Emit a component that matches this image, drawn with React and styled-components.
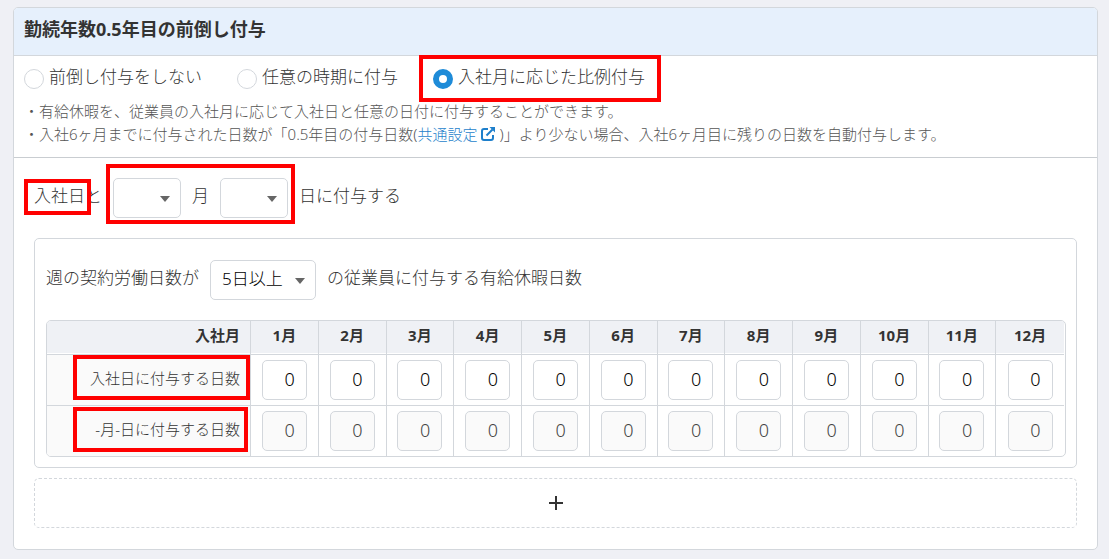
import React, { useState } from 'react'
import styled, { createGlobalStyle } from 'styled-components'

const GlobalStyle = createGlobalStyle`
    *, *::before, *::after {
        box-sizing: border-box;
    }
    body {
        margin: 0;
        background: #eff0f5;
        color: #333;
        font-family: 'Noto Sans', 'Noto Sans CJK JP', sans-serif;
        font-size: 17px;
        font-weight: 300;
        line-height: 24px;
    }
    input, select, button {
        margin: 0;
        font: inherit;
    }
`
const Page = styled.main`
    padding: 7px 11px 9px 13px;
`
const Card = styled.section`
    background: #fff;
    border: 1px solid #d3d7dc;
    border-radius: 5px;
    overflow: hidden;
`
const CardTitle = styled.h2`
    margin: 0;
    padding: 9px 10px 14px;
    background: #e6f0fc;
    border-bottom: 1px solid #d3d7dc;
    font-size: 18px;
    font-weight: 700;
    line-height: 24px;
`
const MethodArea = styled.div`
    display: flex;
    flex-direction: column;
    gap: 11px;
    padding: 13px 10px 11px;
    border-bottom: 1px solid #c9cdd1;
`
const RadioRow = styled.div`
    display: flex;
    gap: 35px;
`
const Highlight = styled.span`
    position: relative;
    display: inline-flex;

    &::after {
        content: '';
        position: absolute;
        inset: ${({ $inset }) => $inset};
        border: 4px solid #f00;
        pointer-events: none;
    }
`
const RadioLabel = styled.label`
    display: flex;
    align-items: center;
    gap: 5px;
    height: 20px;
    white-space: nowrap;
    cursor: pointer;
`
const RadioInput = styled.input`
    appearance: none;
    width: 20px;
    height: 20px;
    border: 1px solid #d3d7dc;
    border-radius: 50%;
    background: #fff;

    &:checked {
        border: 6px solid #1e8bd8;
    }
`
const Text = styled.span`
    padding-bottom: 5px;
    white-space: nowrap;
`
const Notes = styled.ul`
    margin: 0;
    padding: 0;
    list-style: none;
    color: #555;
    font-size: 15px;
    line-height: 23px;
`
const Link = styled.a`
    color: #1e7fcb;
    text-decoration: none;

    svg {
        margin: 0 5px 0 3px;
        vertical-align: -1px;
    }
`
const SettingArea = styled.div`
    display: flex;
    flex-direction: column;
    gap: 20px;
    padding: 20px 20px 21px;
`
const Sentence = styled.div`
    display: flex;
    align-items: center;
    gap: 11px;
`
const SelectBox = styled.span`
    position: relative;
    width: ${({ $wide }) => ($wide ? '106px' : '68px')};

    svg {
        position: absolute;
        top: 18px;
        right: 11px;
        pointer-events: none;
    }
`
const SelectInput = styled.select`
    appearance: none;
    display: block;
    width: 100%;
    height: 40px;
    padding: 0 11px 3px;
    border: 1px solid #d3d7dc;
    border-radius: 5px;
    background: #fff;
    color: #000;
`
const Groups = styled.div`
    display: flex;
    flex-direction: column;
    gap: 10px;
`
const Group = styled.div`
    display: flex;
    flex-direction: column;
    gap: 20px;
    padding: 21px 10px 10px 11px;
    border: 1px solid #d3d7dc;
    border-radius: 5px;
`
const TableFrame = styled.div`
    padding-right: 1px;
    border: 1px solid #d3d7dc;
    border-radius: 5px;
    overflow: hidden;
`
const Table = styled.table`
    width: 100%;
    table-layout: fixed;
    border-collapse: separate;
    border-spacing: 0;
    font-size: 15px;
`
const MonthHead = styled.th`
    height: 34px;
    padding: 0 10px 6px;
    background: #eff1f5;
    border-right: 1px solid #d3d7dc;
    border-bottom: 1px solid #d3d7dc;
    box-shadow: inset 0 -1px #fff;
    font-weight: 700;
    text-align: ${({ $label }) => ($label ? 'right' : 'center')};
    width: ${({ $label }) => ($label ? '204px' : 'auto')};

    &:last-child {
        border-right: 0;
    }
`
const RowHead = styled.th`
    padding: 0 10px 4px;
    background: #fafafa;
    border-right: 1px solid #d3d7dc;
    font-weight: 300;
    text-align: right;
    white-space: nowrap;

    tr:not(:last-child) > & {
        border-bottom: 1px solid #d3d7dc;
    }
`
const DayCell = styled.td`
    padding: 5px 0;
    border-right: 1px solid #d3d7dc;
    text-align: center;

    &:last-child {
        border-right: 0;
    }
    tr:not(:last-child) > & {
        border-bottom: 1px solid #d3d7dc;
    }
`
const DayInput = styled.input`
    display: block;
    width: 45px;
    height: 40px;
    margin: 0 auto;
    padding: 0 11px 3px;
    border: 1px solid #d3d7dc;
    border-radius: 5px;
    background: #fff;
    color: #000;
    font-size: 18px;
    text-align: right;

    &:disabled {
        background: #fafafa;
        color: #444;
    }
`
const AddButton = styled.button`
    display: flex;
    align-items: center;
    justify-content: center;
    width: 100%;
    height: 50px;
    border: 1px dashed #d3d7dc;
    border-radius: 5px;
    background: #fff;
    color: #333;
    cursor: pointer;
`

const Caret = () => (
  <svg width="10" height="6" viewBox="0 0 10 6" aria-hidden="true">
    <path d="M0 0h10L5 6z" fill="#666" />
  </svg>
)

const ExternalIcon = () => (
  <svg width="14" height="14" viewBox="0 0 14 14" fill="none" stroke="currentColor" strokeWidth="2" aria-hidden="true">
    <path d="M7 2H3Q1 2 1 4v7q0 2 2 2h7q2 0 2-2V8" />
    <path d="M5.5 8.5 11.5 2.5" />
    <path d="M8.5 0H14v5.5z" fill="currentColor" stroke="none" />
  </svg>
)

const methods = [
  { id: 'none', label: '前倒し付与をしない' },
  { id: 'any', label: '任意の時期に付与' },
  { id: 'ratio', label: '入社月に応じた比例付与', marked: true },
]

const rows = [
  { id: 'join', label: '入社日に付与する日数', inset: '-11px -10px -10px -17px' },
  { id: 'date', label: '-月-日に付与する日数', disabled: true, inset: '-10px -8px -11px -22px' },
]

const months = Array.from({ length: 12 }, (_, i) => i + 1)

const Select = ({ label, wide, children }) => (
  <SelectBox $wide={wide}>
    <SelectInput aria-label={label}>{children}</SelectInput>
    <Caret />
  </SelectBox>
)

const Method = ({ id, label, checked, onChange }) => (
  <RadioLabel>
    <RadioInput type="radio" name="method" value={id} checked={checked} onChange={onChange} />
    <Text>{label}</Text>
  </RadioLabel>
)

const App = () => {
  const [method, setMethod] = useState('ratio')

  return (
    <Page>
      <GlobalStyle />
      <Card>
        <CardTitle>勤続年数0.5年目の前倒し付与</CardTitle>
        <MethodArea>
          <RadioRow>
            {methods.map(({ id, label, marked }) => {
              const item = (
                <Method key={id} id={id} label={label} checked={method === id} onChange={() => setMethod(id)} />
              )
              return marked ? <Highlight key={id} $inset="-14px -16px -13px -14px">{item}</Highlight> : item
            })}
          </RadioRow>
          <Notes>
            <li>・有給休暇を、従業員の入社月に応じて入社日と任意の日付に付与することができます。</li>
            <li>
              ・入社6ヶ月までに付与された日数が「0.5年目の付与日数(<Link href="#common">共通設定<ExternalIcon /></Link>)」より少ない場合、入社6ヶ月目に残りの日数を自動付与します。
            </li>
          </Notes>
        </MethodArea>
        <SettingArea>
          <Sentence>
            <Text><Highlight $inset="-5px -6px -7px -10px">入社日</Highlight>と</Text>
            <Highlight $inset="-14px -7px -6px -7px">
              <Sentence>
                <Select label="月"><option></option>{months.map((m) => <option key={m}>{m}</option>)}</Select>
                <Text>月</Text>
                <Select label="日"><option></option></Select>
              </Sentence>
            </Highlight>
            <Text>日に付与する</Text>
          </Sentence>
          <Groups>
            <Group>
              <Sentence>
                <Text>週の契約労働日数が</Text>
                <Select label="週の契約労働日数" wide><option>5日以上</option></Select>
                <Text>の従業員に付与する有給休暇日数</Text>
              </Sentence>
              <TableFrame>
                <Table>
                  <thead>
                    <tr>
                      <MonthHead $label scope="col">入社月</MonthHead>
                      {months.map((m) => <MonthHead key={m} scope="col">{m}月</MonthHead>)}
                    </tr>
                  </thead>
                  <tbody>
                    {rows.map(({ id, label, disabled, inset }) => (
                      <tr key={id}>
                        <RowHead scope="row"><Highlight $inset={inset}>{label}</Highlight></RowHead>
                        {months.map((m) => (
                          <DayCell key={m}>
                            <DayInput type="text" inputMode="numeric" defaultValue="0" disabled={disabled} aria-label={`${m}月 ${label}`} />
                          </DayCell>
                        ))}
                      </tr>
                    ))}
                  </tbody>
                </Table>
              </TableFrame>
            </Group>
            <AddButton type="button" aria-label="追加">
              <svg width="14" height="14" viewBox="0 0 14 14" stroke="currentColor" strokeWidth="2" aria-hidden="true">
                <path d="M7 0v14M0 7h14" />
              </svg>
            </AddButton>
          </Groups>
        </SettingArea>
      </Card>
    </Page>
  )
}

export default App
